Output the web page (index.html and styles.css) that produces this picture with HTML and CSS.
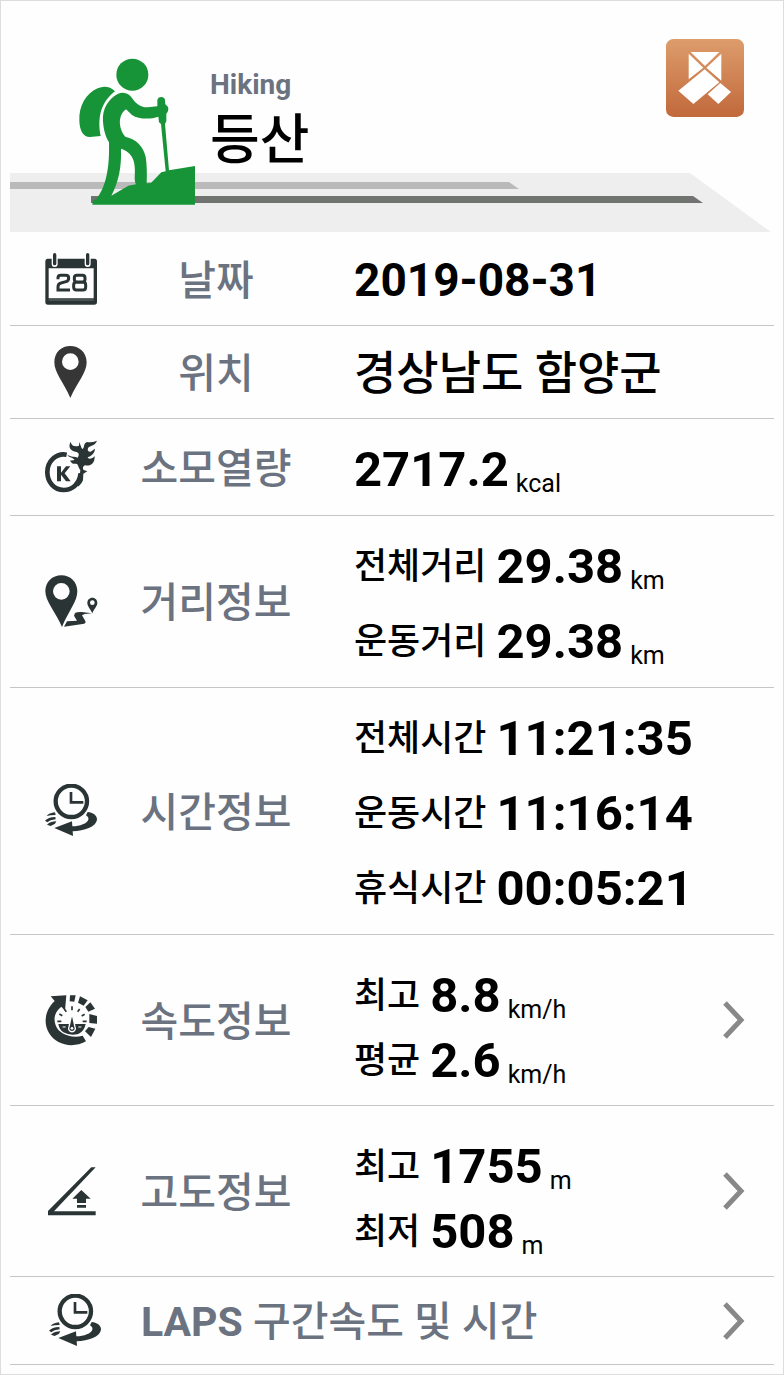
FILE: index.html
```html
<!DOCTYPE html>
<html lang="ko">
<head>
  <meta charset="UTF-8">
  <meta name="viewport" content="width=device-width, initial-scale=1.0">
  <title>등산</title>
  <link rel="stylesheet" href="styles.css">
</head>
<body>

  <main class="record">
    <header class="header">
      <svg class="banner" viewBox="0 0 764 59" preserveAspectRatio="none" aria-hidden="true">
        <polygon points="0,0 680,0 761,59 0,59" fill="#eeeeee"/>
        <polygon points="0,9 499,9 509,16 0,16" fill="#bababa"/>
        <polygon points="81,23 683,23 693,30 81,30" fill="#707370"/>
      </svg>

      <svg class="hiker" viewBox="234 54 351 441" aria-hidden="true">
        <circle cx="397" cy="104" r="48"/>
        <path d="M345 154C330 139 311 137 293 145C257 160 236 200 238 242C239 272 250 291 270 291L302 288C293 240 298 190 345 154Z"/>
        <path d="M309 245C306 205 326 177 353 162C370 153 388 160 396 174C410 194 425 203 443 202L472 199L472 180Q474 171 484 171Q494 172 495 180L496 193Q505 199 505 208Q504 218 499 221L499 244L495 252L507 391L585 378L585 494L277 494L279 480L289 478C317 440 329 390 327 307C316 288 311 270 309 245ZM378 208C362 219 357 240 361 260C365 274 369 283 376 290C410 298 430 320 437 350C441 374 441 405 440 430L453 429L484 397L497 394L483 252L477 247L475 230C452 238 417 239 396 225ZM363 326C365 380 356 426 334 467L385 437L408 433Q404 428 404 415C408 364 399 338 363 326Z" fill-rule="evenodd"/>
      </svg>

      <div class="title">
        <span class="title-en">Hiking</span>
        <h1 class="title-ko">등산</h1>
      </div>

      <button class="app-button" type="button" aria-label="앱">
        <svg viewBox="50 27 234 234">
          <defs>
            <linearGradient id="copper" x1="0" y1="0" x2="0" y2="1">
              <stop offset="0" stop-color="#dd9c6c"/>
              <stop offset="1" stop-color="#c1693b"/>
            </linearGradient>
          </defs>
          <rect x="50" y="27" width="234" height="234" rx="22" fill="url(#copper)"/>
          <g fill="#fff">
            <polygon points="124,66 210,66 167,108"/>
            <polygon points="118,71 162,113 118,148"/>
            <polygon points="216,71 216,152 171,113"/>
            <polygon points="166,118 210,157 132,222 87,182"/>
            <polygon points="213,159 245,186 207,222 175,193"/>
          </g>
        </svg>
      </button>
    </header>

    <ul class="rows">
      <li class="row">
        <svg class="icon" viewBox="42 34 162 162" aria-hidden="true">
          <path d="M52 54H194Q201 54 201 62V184Q201 192 193 192H54Q46 192 46 184V62Q46 54 52 54ZM56 83V173H191V83Z" fill-rule="evenodd"/>
          <path d="M56 178H191" stroke="#8b9090" stroke-width="2"/>
          <path d="M74 43V70M173 43V70" stroke="#fff" stroke-width="18" stroke-linecap="round"/>
          <path d="M74 42V69M173 42V69" stroke="#2b3435" stroke-width="10" stroke-linecap="round"/>
          <path d="M84 116V112Q84 104 92 104H107Q116 104 116 112Q116 121 108 123L93 127Q84 129 84 139V148H120M141 104H157Q165 104 165 112V116Q165 124 157 124H141Q133 124 133 116V112Q133 104 141 104ZM139 125H160Q167 125 167 133V140Q167 148 159 148H140Q131 148 131 140V133Q131 125 139 125Z" fill="none" stroke="#2b3435" stroke-width="9"/>
        </svg>
        <span class="label">날짜</span>
        <div class="values"><p><b class="date">2019-08-31</b></p></div>
      </li>

      <li class="row">
        <svg class="icon pin" viewBox="42 314 162 162" aria-hidden="true">
          <path d="M121 317C146 317 170 335 170 366C170 398 142 426 121 473C101 426 73 398 73 366C73 335 95 317 121 317ZM121 339A25 25 0 1 0 121 389A25 25 0 1 0 121 339Z" fill-rule="evenodd"/>
        </svg>
        <span class="label">위치</span>
        <div class="values"><p><b class="place">경상남도 함양군</b></p></div>
      </li>

      <li class="row">
        <svg class="icon" viewBox="42 30 162 162" aria-hidden="true">
          <path d="M110 74C79 68 52 93 52 127C52 157 73 180 101 180C129 180 149 159 152 130" fill="none" stroke="#2b3435" stroke-width="14"/>
          <path d="M112 74C123 82 134 78 143 83C149 73 147 67 136 65C122 62 113 51 122 35C124 48 135 51 147 47L148 36C151 43 153 53 157 57C165 54 158 41 171 36Q184 39 201 32C194 49 183 45 176 52C171 58 173 67 182 65L195 56C194 70 184 78 173 82C176 90 187 86 194 78C195 101 181 109 166 106C159 107 157 115 161 120L172 124L160 131L159 151Q152 166 143 170L148 147L151 120C144 111 145 101 138 101C124 104 124 94 119 92L134 90C126 80 117 83 112 74Z"/>
          <path d="M81 109H93V128L108 109H121L104 130L122 154H108L93 134V154H81Z"/>
        </svg>
        <span class="label">소모열량</span>
        <div class="values stats"><p><b>2717.2</b><small>kcal</small></p></div>
      </li>

      <li class="row">
        <svg class="icon" viewBox="42 43 162 162" aria-hidden="true">
          <path d="M94 44C121 44 142 64 142 92C142 123 116 150 96 199C77 154 46 122 46 92C46 64 67 44 94 44ZM94 67A25 25 0 1 0 94 117A25 25 0 1 0 94 67Z" fill-rule="evenodd"/>
          <path d="M187 111C196 111 202 118 202 127C202 136 193 143 187 158C181 145 172 136 172 127C172 118 178 111 187 111ZM187 119A7 7 0 1 0 187 133A7 7 0 1 0 187 119Z" fill-rule="evenodd"/>
          <path d="M186 158L164 160L156 164L166 181Q169 189 158 190L102 198L111 182L141 180L132 165L135 157Q142 153 155 154Z"/>
        </svg>
        <span class="label">거리정보</span>
        <div class="values stats">
          <p><span>전체거리</span><b>29.38</b><small>km</small></p>
          <p><span>운동거리</span><b>29.38</b><small>km</small></p>
        </div>
      </li>

      <li class="row">
        <svg class="icon" viewBox="42 42 162 162" aria-hidden="true">
          <g id="clock">
            <circle cx="124" cy="94" r="47" fill="none" stroke="#2b3435" stroke-width="13"/>
            <path d="M123 66V97H160" fill="none" stroke="#2b3435" stroke-width="8"/>
            <path d="M173 126C188 127 202 136 201 149C198 171 163 182 128 184L129 198L73 174L126 154L127 169C150 168 172 160 175 149Q177 142 168 136Z"/>
            <path d="M50 138Q57 129 75 127L77 135Q60 135 50 138ZM45 152Q54 142 76 141L77 148Q60 150 52 157ZM51 164Q62 154 79 154L75 161L62 168Z"/>
          </g>
        </svg>
        <span class="label">시간정보</span>
        <div class="values stats">
          <p><span>전체시간</span><b>11:21:35</b></p>
          <p><span>운동시간</span><b>11:16:14</b></p>
          <p><span>휴식시간</span><b>00:05:21</b></p>
        </div>
      </li>

      <li>
        <a class="row row-link" href="#speed">
          <svg class="icon" viewBox="42 36 162 162" aria-hidden="true">
            <path d="M62 46L109 43L105 89L94 77C75 91 69 111 77 133C86 159 124 174 158 164L168 181C127 204 78 191 57 156C38 125 47 84 74 60Z"/>
            <path d="M120 43L137 43L133 62L119 61ZM150 46L173 58L161 74L144 65ZM181 64L195 83L175 92L166 78ZM178 99L201 105V128L178 126ZM176 138L196 143L183 168L165 151Z"/>
            <path d="M85 129H167Q163 151 145 159Q119 165 100 154Q88 146 85 129Z"/>
            <path d="M82 121H94M88 99L97 104M103 84L109 92M126 76V88M149 84L143 92M164 100L155 105M158 121H170" stroke="#2b3435" stroke-width="5"/>
            <path d="M126 96L135 138A10 10 0 1 1 117 138Z" stroke="#fff" stroke-width="4"/>
            <circle cx="126" cy="142" r="4" fill="#fff"/>
            <path d="M98 138H107M145 138H154" stroke="#fff" stroke-width="3"/>
          </svg>
          <span class="label">속도정보</span>
          <div class="values stats">
            <p><span>최고</span><b>8.8</b><small>km/h</small></p>
            <p><span>평균</span><b>2.6</b><small>km/h</small></p>
          </div>
          <svg class="chevron" viewBox="0 0 24 40" aria-hidden="true"><path d="M3 3L19 20L3 37"/></svg>
        </a>
      </li>

      <li>
        <a class="row row-link" href="#altitude">
          <svg class="icon" viewBox="42 29 162 162" aria-hidden="true">
            <path d="M54 170L184 39H197L72 171H197V183H54Z"/>
            <path d="M154 107L182 133H168V146H141V133H127ZM141 152H168V160H141Z"/>
          </svg>
          <span class="label">고도정보</span>
          <div class="values stats">
            <p><span>최고</span><b>1755</b><small>m</small></p>
            <p><span>최저</span><b>508</b><small>m</small></p>
          </div>
          <svg class="chevron" viewBox="0 0 24 40" aria-hidden="true"><path d="M3 3L19 20L3 37"/></svg>
        </a>
      </li>

      <li>
        <a class="row row-laps" href="#laps">
          <svg class="icon" viewBox="42 42 162 162" aria-hidden="true"><use href="#clock"/></svg>
          <span class="label"><b>LAPS</b> 구간속도 및 시간</span>
          <svg class="chevron" viewBox="0 0 24 40" aria-hidden="true"><path d="M3 3L19 20L3 37"/></svg>
        </a>
      </li>
    </ul>
  </main>

</body>
</html>
```
FILE: styles.css
```css
* {
  box-sizing: border-box;
}

body {
  margin: 0;
  background: #fefefe;
  color: #000;
  font-family: Roboto, "Noto Sans CJK KR", sans-serif;
}

.record {
  border: 1px solid #ddd;
  padding: 0 9px 9px;
}

/* header */
.header {
  position: relative;
  display: flex;
  align-items: flex-start;
  height: 232px;
  padding: 38px 30px 0 68px;
}

.banner {
  position: absolute;
  left: 0;
  bottom: 1px;
  width: 100%;
  height: 59px;
}

.hiker {
  position: relative;
  width: 117px;
  height: 147px;
  margin-top: 19px;
  fill: #189438;
}

.title {
  position: relative;
  flex: 1;
  padding: 28px 0 0 15px;
}

.title-en {
  display: block;
  color: #6b7280;
  font-size: 28px;
  font-weight: 700;
  line-height: 36px;
}

.title-ko {
  margin: 0;
  font-size: 54px;
  font-weight: 500;
  line-height: 76px;
}

.app-button {
  width: 78px;
  height: 78px;
  padding: 0;
  border: 0;
  background: none;
  cursor: pointer;
}

.app-button svg {
  display: block;
}

/* rows */
.rows {
  margin: 0;
  padding: 0;
  list-style: none;
}

.row {
  display: grid;
  grid-template-columns: 54px 236px 1fr auto;
  align-items: center;
  padding: 9px 28px 9px 34px;
  border-bottom: 1px solid #c6c6c6;
  color: inherit;
  text-decoration: none;
}

.icon {
  width: 54px;
  height: 54px;
  fill: #2b3435;
}

.pin {
  fill: #363636;
}

.label {
  padding-top: 3px;
  color: #6b7280;
  font-size: 41px;
  font-weight: 500;
  line-height: 60px;
  text-align: center;
}

.values {
  padding-left: 20px;
}

.values p {
  display: flex;
  align-items: center;
  height: 74px;
  margin: 0;
  padding-top: 2px;
  line-height: 1;
  white-space: nowrap;
}

.values span {
  margin-right: 10px;
  font-size: 36px;
  font-weight: 500;
}

.values b {
  font-size: 49px;
  font-weight: 700;
}

.values .date {
  font-size: 46px;
}

.values .place {
  font-size: 46px;
  font-weight: 500;
}

.values small {
  margin: 28px 0 0 7px;
  font-size: 25px;
}

.stats {
  padding-top: 3px;
}

.stats p {
  height: 75px;
}

.row-link .stats {
  padding-top: 18px;
  padding-bottom: 4px;
}

.row-link .stats p {
  height: 65px;
}

/* laps row has no values, its label takes the rest */
.row-laps {
  grid-template-columns: 58px 1fr auto;
  padding-top: 12px;
  padding-bottom: 12px;
}

.row-laps .icon {
  justify-self: end;
}

.row-laps .label {
  padding-left: 39px;
  text-align: left;
}

.chevron {
  width: 24px;
  height: 40px;
  fill: none;
  stroke: #888;
  stroke-width: 5;
}
```
